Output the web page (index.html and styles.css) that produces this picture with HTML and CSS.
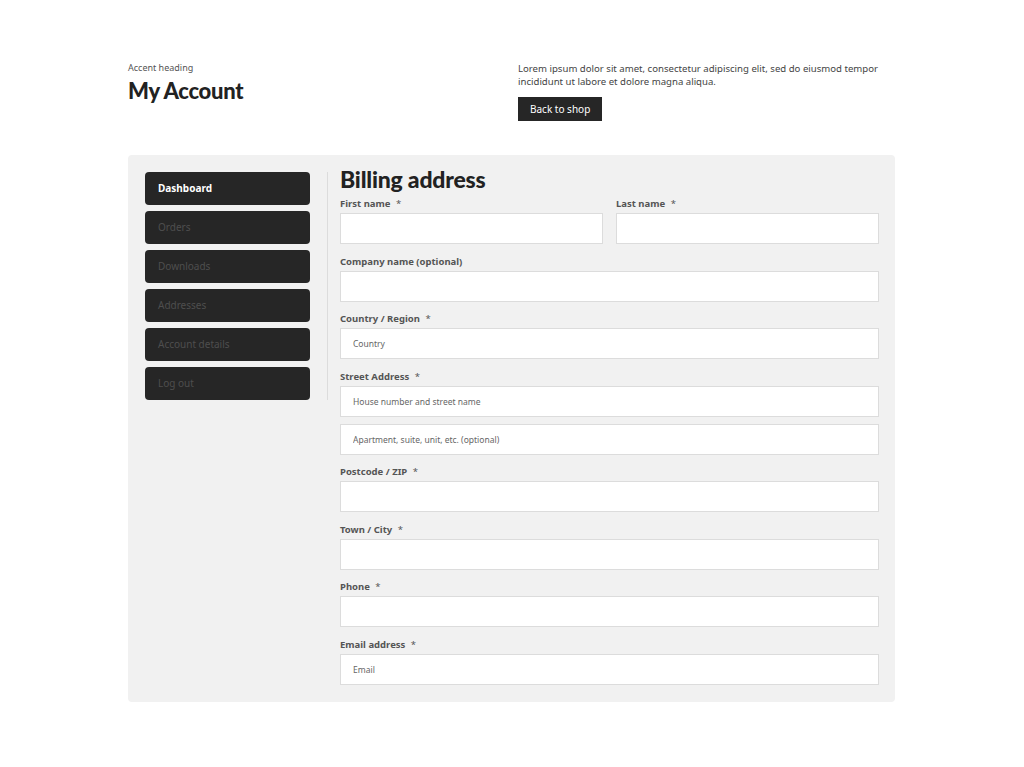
FILE: index.html
```html
<!DOCTYPE html>
<html lang="en">
<head>
<meta charset="utf-8">
<title>My Account</title>
<link rel="stylesheet" href="styles.css">
</head>
<body>
<div class="page">
  <header class="top">
    <div class="top-left">
      <div class="accent">Accent heading</div>
      <h1 class="title">My Account</h1>
    </div>
    <div class="top-right">
      <p class="intro">Lorem ipsum dolor sit amet, consectetur adipiscing elit, sed do eiusmod tempor incididunt ut labore et dolore magna aliqua.</p>
      <a class="btn" href="#">Back to shop</a>
    </div>
  </header>

  <section class="panel">
    <nav class="sidebar">
      <a class="nav-item active" href="#">Dashboard</a>
      <a class="nav-item" href="#">Orders</a>
      <a class="nav-item" href="#">Downloads</a>
      <a class="nav-item" href="#">Addresses</a>
      <a class="nav-item" href="#">Account details</a>
      <a class="nav-item" href="#">Log out</a>
    </nav>
    <div class="divider"></div>
    <form class="form">
      <h2 class="form-title">Billing address</h2>
      <div class="row two">
        <div class="field">
          <label class="label">First name <span class="req">*</span></label>
          <input class="input" type="text">
        </div>
        <div class="field">
          <label class="label">Last name <span class="req">*</span></label>
          <input class="input" type="text">
        </div>
      </div>
      <div class="field">
        <label class="label">Company name (optional)</label>
        <input class="input" type="text">
      </div>
      <div class="field">
        <label class="label">Country / Region <span class="req">*</span></label>
        <input class="input" type="text" placeholder="Country">
      </div>
      <div class="field">
        <label class="label">Street Address <span class="req">*</span></label>
        <input class="input" type="text" placeholder="House number and street name">
        <input class="input second" type="text" placeholder="Apartment, suite, unit, etc. (optional)">
      </div>
      <div class="field">
        <label class="label">Postcode / ZIP <span class="req">*</span></label>
        <input class="input" type="text">
      </div>
      <div class="field">
        <label class="label">Town / City <span class="req">*</span></label>
        <input class="input" type="text">
      </div>
      <div class="field">
        <label class="label">Phone <span class="req">*</span></label>
        <input class="input" type="text">
      </div>
      <div class="field last">
        <label class="label">Email address <span class="req">*</span></label>
        <input class="input" type="text" placeholder="Email">
      </div>
    </form>
  </section>
</div>
</body>
</html>
```

FILE: styles.css
```css
* { box-sizing: border-box; }
html, body { margin: 0; padding: 0; background: #ffffff; }
body {
  font-family: "DejaVu Sans", "Noto Sans", sans-serif;
  color: #222;
}
.page {
  width: 767px;
  margin: 0 0 0 128px;
  padding-top: 62px;
}
.top {
  display: grid;
  grid-template-columns: 390px 1fr;
  margin-bottom: 34px;
}
.accent {
  font-family: "Noto Sans", sans-serif;
  font-size: 9px;
  line-height: 11px;
  color: #555;
}
.title {
  margin: 5px 0 0;
  font-family: "Lato", "Inter", sans-serif;
  font-weight: 900;
  font-size: 22px;
  line-height: 26px;
  letter-spacing: -0.3px;
  color: #222;
}
.intro {
  margin: 0 0 9px;
  font-family: "Noto Sans", sans-serif;
  font-size: 9.6px;
  line-height: 13px;
  color: #444;
  max-width: 377px;
}
.btn {
  display: inline-block;
  background: #262626;
  color: #fff;
  text-decoration: none;
  font-family: "Noto Sans", sans-serif;
  font-size: 10px;
  line-height: 24px;
  height: 24px;
  padding: 0 12px;
}
.panel {
  background: #f1f1f1;
  border-radius: 4px;
  padding: 17px 16px 17px 17px;
  display: flex;
  align-items: flex-start;
}
.sidebar {
  width: 165px;
  display: flex;
  flex-direction: column;
  gap: 6px;
  flex: none;
}
.nav-item {
  display: block;
  height: 33px;
  line-height: 33px;
  background: #262626;
  border-radius: 4px;
  padding: 0 13px;
  font-family: "Noto Sans", sans-serif;
  font-size: 10px;
  color: #4e4e4e;
  text-decoration: none;
}
.nav-item.active {
  color: #fff;
  font-weight: 700;
}
.divider {
  width: 1px;
  background: #dcdcdc;
  margin: 0 12px 0 17px;
  height: 228px;
  flex: none;
}
.form {
  flex: 1;
  display: flex;
  flex-direction: column;
  gap: 11.5px;
  margin: 0;
}
.form-title {
  margin: -6px 0 -5.5px;
  font-family: "Lato", "Inter", sans-serif;
  font-weight: 900;
  font-size: 23px;
  line-height: 26px;
  color: #222;
  letter-spacing: -0.2px;
}
.row.two {
  display: grid;
  grid-template-columns: 1fr 1fr;
  gap: 13px;
}
.field {
  display: flex;
  flex-direction: column;
}
.label {
  display: block;
  font-family: "Noto Sans", sans-serif;
  font-size: 9.5px;
  font-weight: 700;
  line-height: 12px;
  color: #555;
  margin-bottom: 3px;
}
.req { margin-left: 3px; font-weight: 400; }
.input {
  display: block;
  width: 100%;
  height: 31px;
  background: #fff;
  border: 1px solid #dcdcdc;
  border-radius: 0;
  padding: 0 12px;
  font-family: "Noto Sans", sans-serif;
  font-size: 8.5px;
  color: #333;
  outline: none;
}
.input::placeholder { color: #666; }
.input.second { margin-top: 7px; }
```
